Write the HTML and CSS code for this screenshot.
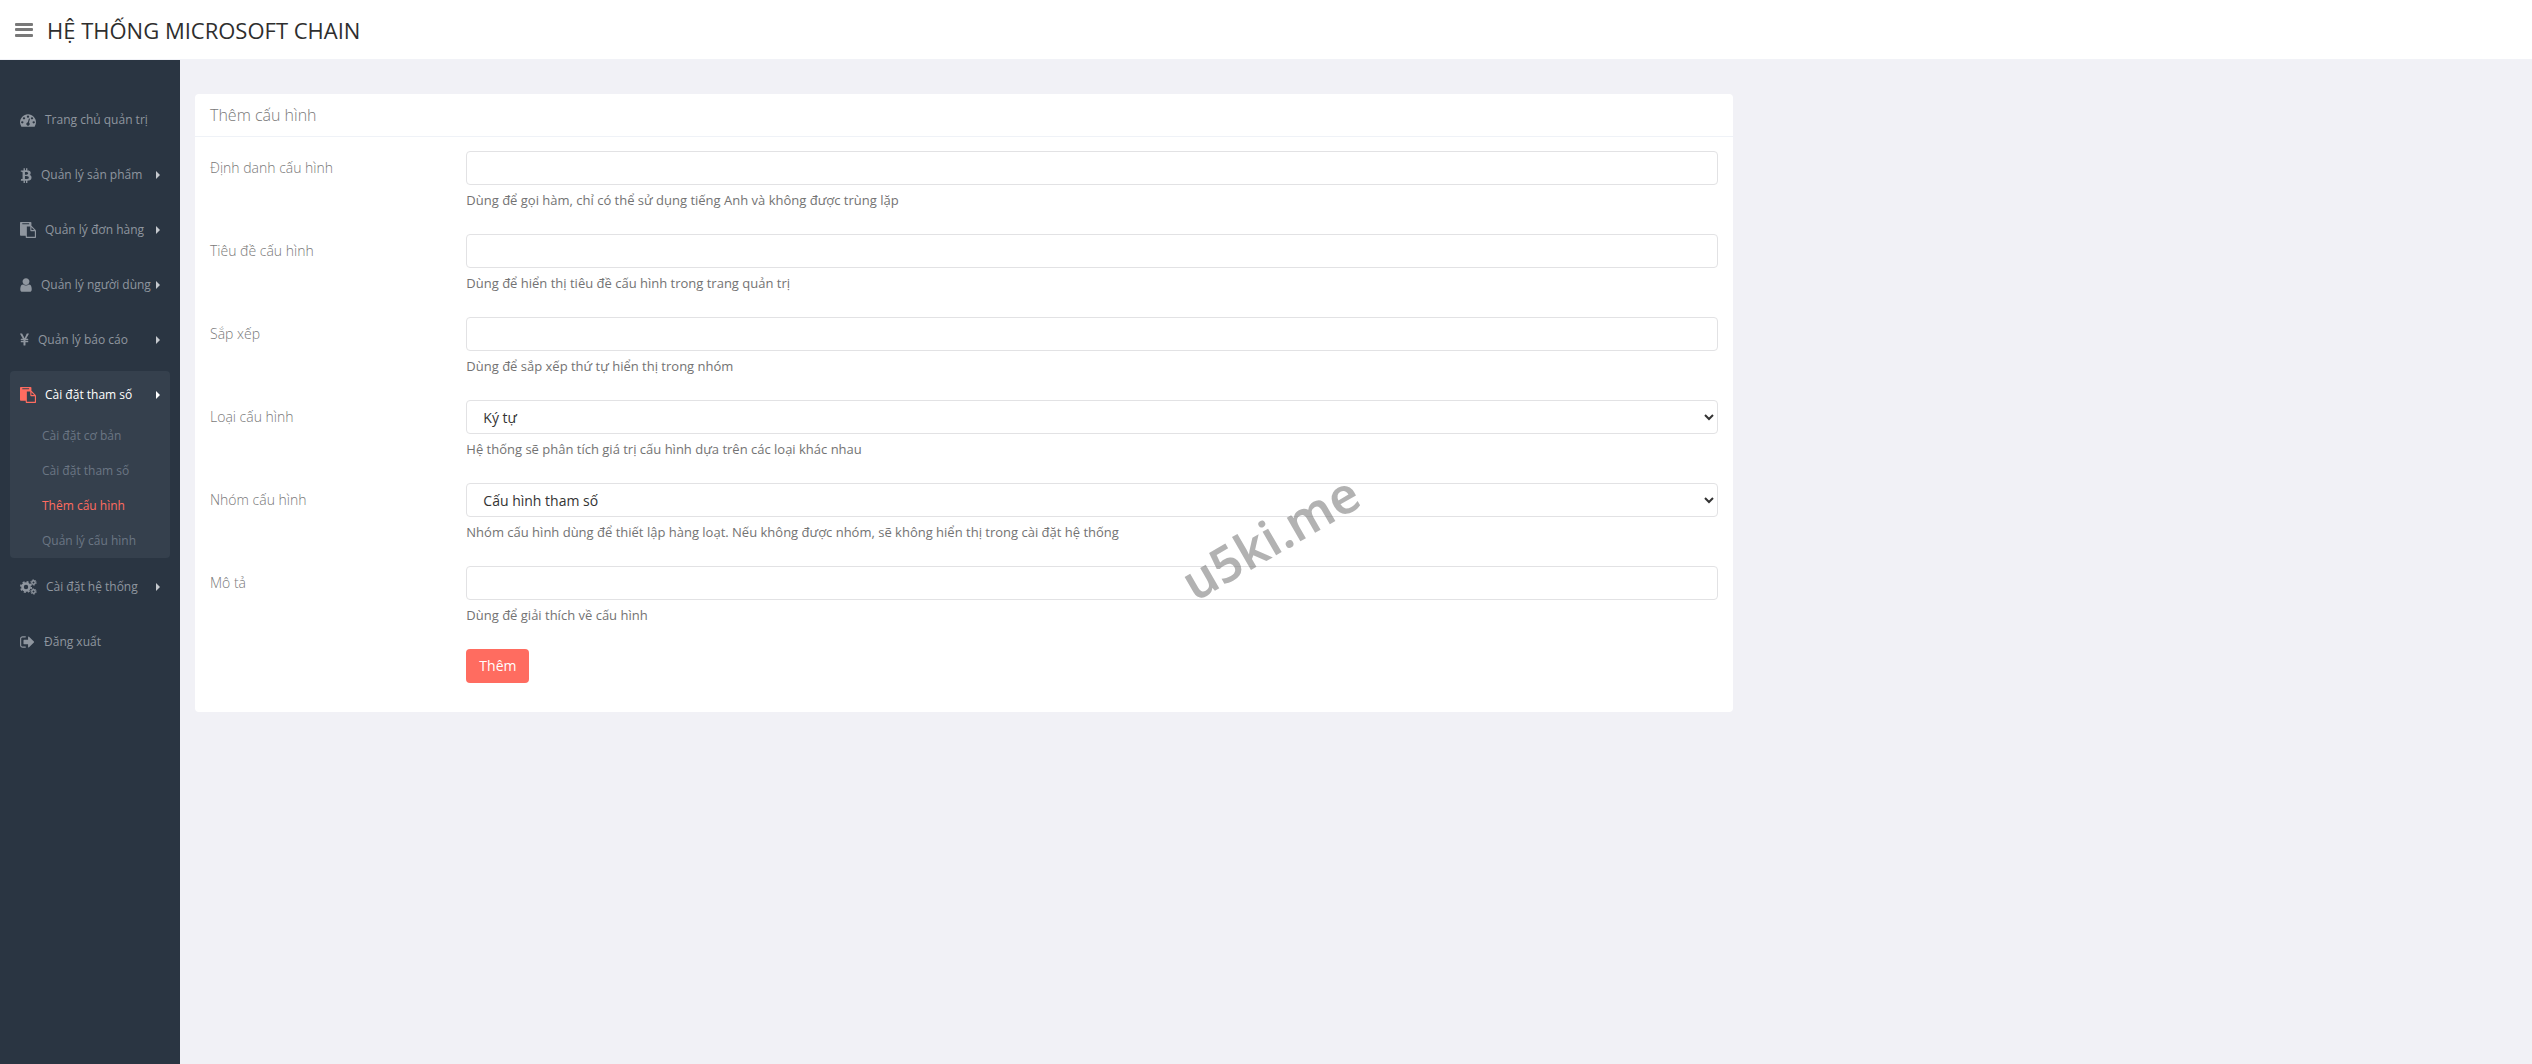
FILE: index.html
```html
<!DOCTYPE html>
<html lang="vi">
<head>
<meta charset="utf-8">
<meta name="viewport" content="width=device-width, initial-scale=1">
<title>Thêm cấu hình</title>
<link rel="stylesheet" href="styles.css">
</head>
<body>
<header class="topbar">
  <button class="toggle" type="button" aria-label="Menu">
    <svg width="18" height="14" viewBox="0 0 18 14" fill="currentColor"><rect width="18" height="3" rx="1"/><rect y="5" width="18" height="3" rx="1"/><rect y="11" width="18" height="3" rx="1"/></svg>
  </button>
  <a class="brand" href="#">HỆ THỐNG MICROSOFT CHAIN</a>
</header>
<div class="layout">
  <nav class="sidebar">
    <ul class="menu">
      <li class="menu-item"><a class="menu-link" href="#">
        <svg width="16" height="16" viewBox="0 0 1792 1792"><path d="M384 1152q0-53-37.5-90.5T256 1024t-90.5 37.5T128 1152t37.5 90.5T256 1280t90.5-37.5T384 1152zm192-448q0-53-37.5-90.5T448 576t-90.5 37.5T320 704t37.5 90.5T448 832t90.5-37.5T576 704zm428 481l101-382q6-26-7.5-48.5T1059 725t-48 6.5-30 39.5l-101 382q-60 5-107 43.5t-63 98.5q-20 77 20 146t117 89 146-20 89-117q16-60-6-117t-72-91zm660-33q0-53-37.5-90.5T1536 1024t-90.5 37.5T1408 1152t37.5 90.5T1536 1280t90.5-37.5T1664 1152zm-640-640q0-53-37.5-90.5T896 384t-90.5 37.5T768 512t37.5 90.5T896 640t90.5-37.5T1024 512zm448 192q0-53-37.5-90.5T1344 576t-90.5 37.5T1216 704t37.5 90.5T1344 832t90.5-37.5T1472 704zm320 448q0 261-141 483-19 29-54 29H195q-35 0-54-29Q0 1414 0 1152q0-182 71-348t191-286 286-191 348-71 348 71 286 191 191 286 71 348z"/></svg>
        <span>Trang chủ quản trị</span></a></li>
      <li class="menu-item"><a class="menu-link" href="#">
        <svg width="12" height="16" viewBox="0 0 1280 1792"><path d="M1167 640q18 182-131 258 117 28 175 103t45 214q-7 71-32.5 125t-64.5 89-97 58.5-121.5 34.5-145.5 15v255H641v-251q-80 0-122-1v252H365v-255q-18 0-54-.5t-55-.5H56l31-183h111q50 0 58-51V900h16q-6-1-16-1V612q-13-68-89-68H56V380l212 1q64 0 97-1V128h154v247q82-2 122-2V128h154v252q79 7 140 22.5t113 45 82.5 78 36.5 114.5zm-215 545q0-36-15-64t-37-46-57.5-30.5T777 1026t-74-9-69-3-64.5 1-47.5 1v338q8 0 37 .5t48 .5 53-1.5 58.5-4 57-8.5 55.5-14 47.5-21 39.5-30 24.5-40 9.5-51zm-71-476q0-33-12.5-58.5t-30.5-42-48-28-55-16.5-61.5-8-58-2.5-54 1-39.5.5v307q5 0 34.5.5t46.5 0 50-2 55-5.5 51.5-11 48.5-18.5 37-27 27-38.5 9-51z"/></svg>
        <span>Quản lý sản phẩm</span><i class="caret"></i></a></li>
      <li class="menu-item"><a class="menu-link" href="#">
        <svg width="16" height="16" viewBox="0 0 1792 1792"><path d="M768 1664h896v-640h-416q-40 0-68-28t-28-68V512H768v1152zm256-1440v-64q0-13-9.500-22.500T992 128H288q-13 0-22.500 9.500T256 160v64q0 13 9.500 22.500T288 256h704q13 0 22.500-9.500T1024 224zm256 672h299l-299-299v299zm512 128v672q0 40-28 68t-68 28H736q-40 0-68-28t-28-68v-160H96q-40 0-68-28t-28-68V96q0-40 28-68T96 0h1088q40 0 68 28t28 68v328q21 13 36 28l408 408q28 28 48 76t20 88z"/></svg>
        <span>Quản lý đơn hàng</span><i class="caret"></i></a></li>
      <li class="menu-item"><a class="menu-link" href="#">
        <svg width="12" height="16" viewBox="256 0 1280 1792"><path d="M1536 1399q0 109-62.500 187t-150.500 78H469q-88 0-150.500-78T256 1399q0-85 8.500-160.500t31.500-152 58.500-131 94-89T583 832q131 128 313 128t313-128q76 0 134.500 34.500t94 89 58.500 131 31.500 152 8.500 160.500zm-256-887q0 159-112.500 271.500T896 896 624.500 783.500 512 512t112.500-271.500T896 128t271.500 112.500T1280 512z"/></svg>
        <span>Quản lý người dùng</span><i class="caret"></i></a></li>
      <li class="menu-item"><a class="menu-link" href="#">
        <svg width="9" height="16" viewBox="130 0 1060 1792"><path d="M745 1536H573q-13 0-22.500-9t-9.500-23v-330H253q-13 0-22.500-9t-9.500-23v-103q0-13 9.500-22.500t22.500-9.500h288v-85H253q-13 0-22.500-9t-9.500-23V787q0-13 9.500-22.500T253 755h214L146 177q-8-16 0-32 10-17 28-17h194q20 0 29 18l215 425q19 38 56 125 10-24 30.500-68t27.500-61l191-420q8-19 29-19h191q17 0 27 16 9 14 1 31L851 755h215q13 0 22.500 9.500t9.500 22.500v104q0 14-9.500 23t-22.500 9H774v85h292q13 0 22.500 9.500t9.500 22.500v103q0 14-9.500 23t-22.500 9H774v330q0 13-9 22.500t-20 9.500z"/></svg>
        <span>Quản lý báo cáo</span><i class="caret"></i></a></li>
      <li class="menu-item open"><a class="menu-link" href="#">
        <svg width="16" height="16" viewBox="0 0 1792 1792"><path d="M768 1664h896v-640h-416q-40 0-68-28t-28-68V512H768v1152zm256-1440v-64q0-13-9.500-22.500T992 128H288q-13 0-22.500 9.500T256 160v64q0 13 9.500 22.500T288 256h704q13 0 22.500-9.500T1024 224zm256 672h299l-299-299v299zm512 128v672q0 40-28 68t-68 28H736q-40 0-68-28t-28-68v-160H96q-40 0-68-28t-28-68V96q0-40 28-68T96 0h1088q40 0 68 28t28 68v328q21 13 36 28l408 408q28 28 48 76t20 88z"/></svg>
        <span>Cài đặt tham số</span><i class="caret"></i></a>
        <ul class="submenu">
          <li><a class="sub-link" href="#">Cài đặt cơ bản</a></li>
          <li><a class="sub-link" href="#">Cài đặt tham số</a></li>
          <li><a class="sub-link current" href="#">Thêm cấu hình</a></li>
          <li><a class="sub-link" href="#">Quản lý cấu hình</a></li>
        </ul></li>
      <li class="menu-item"><a class="menu-link" href="#">
        <svg width="17" height="16" viewBox="0 0 17 16"><g fill="none" stroke="currentColor"><circle cx="6" cy="8" r="3.500" stroke-width="2.600"/><circle cx="6" cy="8" r="5.200" stroke-width="1.700" stroke-dasharray="2 2.084"/><circle cx="13.500" cy="3.500" r="1.700" stroke-width="1.400"/><circle cx="13.500" cy="3.500" r="2.700" stroke-width="1" stroke-dasharray="1.400 1.427"/><circle cx="13.500" cy="12.500" r="1.700" stroke-width="1.400"/><circle cx="13.500" cy="12.500" r="2.700" stroke-width="1" stroke-dasharray="1.400 1.427"/></g></svg>
        <span>Cài đặt hệ thống</span><i class="caret"></i></a></li>
      <li class="menu-item"><a class="menu-link" href="#">
        <svg width="15" height="16" viewBox="0 0 1664 1792"><path d="M640 1440q0 4 1 20t.5 26.500-3 23.500-10 19.500-20.500 6.500H288q-119 0-203.500-84.500T0 1248V544q0-119 84.500-203.500T288 256h320q13 0 22.500 9.500T640 288q0 4 1 20t.5 26.500-3 23.500-10 19.500T608 384H288q-66 0-113 47t-47 113v704q0 66 47 113t113 47h312l11.500 1 11.500 3 8 5.500 7 9 2 13.500zm928-544q0 26-19 45l-544 544q-19 19-45 19t-45-19-19-45v-288H448q-26 0-45-19t-19-45V704q0-26 19-45t45-19h448V352q0-26 19-45t45-19 45 19l544 544q19 19 19 45z"/></svg>
        <span>Đăng xuất</span></a></li>
    </ul>
  </nav>
  <main class="content">
    <section class="panel">
      <h1 class="panel-title">Thêm cấu hình</h1>
      <form class="panel-body">
        <div class="field">
          <label class="label" for="name">Định danh cấu hình</label>
          <div class="entry"><input class="control" id="name" type="text">
            <p class="help">Dùng để gọi hàm, chỉ có thể sử dụng tiếng Anh và không được trùng lặp</p></div>
        </div>
        <div class="field">
          <label class="label" for="title">Tiêu đề cấu hình</label>
          <div class="entry"><input class="control" id="title" type="text">
            <p class="help">Dùng để hiển thị tiêu đề cấu hình trong trang quản trị</p></div>
        </div>
        <div class="field">
          <label class="label" for="sort">Sắp xếp</label>
          <div class="entry"><input class="control" id="sort" type="text">
            <p class="help">Dùng để sắp xếp thứ tự hiển thị trong nhóm</p></div>
        </div>
        <div class="field">
          <label class="label" for="type">Loại cấu hình</label>
          <div class="entry"><select class="control" id="type"><option>Ký tự</option></select>
            <p class="help">Hệ thống sẽ phân tích giá trị cấu hình dựa trên các loại khác nhau</p></div>
        </div>
        <div class="field">
          <label class="label" for="group">Nhóm cấu hình</label>
          <div class="entry"><select class="control" id="group"><option>Cấu hình tham số</option></select>
            <p class="help">Nhóm cấu hình dùng để thiết lập hàng loạt. Nếu không được nhóm, sẽ không hiển thị trong cài đặt hệ thống</p></div>
        </div>
        <div class="field">
          <label class="label" for="remark">Mô tả</label>
          <div class="entry"><input class="control" id="remark" type="text">
            <p class="help">Dùng để giải thích về cấu hình</p></div>
        </div>
        <div class="field">
          <div class="entry actions"><button class="submit" type="submit">Thêm</button></div>
        </div>
      </form>
    </section>
  </main>
</div>
<div class="watermark">u5ki.me</div>
</body>
</html>
```
FILE: styles.css
```css
* { box-sizing: border-box; }
body {
  margin: 0;
  min-height: 100vh;
  display: flex;
  flex-direction: column;
  position: relative;
  background: #f1f1f6;
  color: #797979;
  font: 13px/20px "Open Sans", "Noto Sans", sans-serif;
}
ul { list-style: none; margin: 0; padding: 0; }
a { color: inherit; text-decoration: none; }
button, input, select { font: inherit; }

.topbar {
  display: flex;
  align-items: center;
  gap: 14px;
  height: 60px;
  padding: 0 15px;
  background: #fff;
  border-bottom: 1px solid #f1f2f7;
}
.toggle { display: flex; padding: 0; border: 0; background: none; color: #797979; }
.brand { font-size: 22px; line-height: 30px; color: #2e2e2e; }

.layout { flex: 1; display: flex; }
.sidebar { flex: 0 0 180px; min-width: 0; padding: 36px 10px 0; background: #2a3542; color: #aeb2b7; }
.menu-item { margin-bottom: 7px; }
.menu-link { display: flex; align-items: center; height: 48px; padding: 0 10px; font-size: 12px; white-space: nowrap; color: #8f969f; }
.menu-link svg { flex: none; margin-right: 9px; fill: currentColor; }
.caret { flex: none; margin-left: auto; border: solid transparent; border-width: 4px 0 4px 4px; border-left-color: #c5c9ce; }
.open { margin-bottom: 5px; background: #35404d; border-radius: 4px; }
.open > .menu-link { color: #fff; }
.open > .menu-link svg { color: #ff6c60; }
.open .caret { border-left-color: #fff; }
.submenu { margin-top: -1px; }
.sub-link { display: block; padding-left: 32px; font-size: 12px; line-height: 35px; color: #6b7684; }
.sub-link.current { color: #ff6c60; }

.content { flex: 1; min-width: 0; padding-top: 34px; }
.panel { width: calc(66.6667% - 30px); margin-left: 15px; background: #fff; border-radius: 4px; }
.panel-title { margin: 0; padding: 10px 15px; border-bottom: 1px solid #eff2f7; font-size: 16px; line-height: 22px; font-weight: 300; }
.panel-body { padding: 14px 0 29px; }
.field { display: grid; grid-template-columns: 1fr 5fr; margin-bottom: 15px; }
.field:last-child { margin-bottom: 0; }
.label { padding: 7px 15px 0; font-size: 14px; font-weight: 300; }
.entry { padding: 0 15px; }
.actions { grid-column: 2; }
.control { display: block; width: 100%; height: 34px; padding: 6px 12px; border: 1px solid #e2e2e4; border-radius: 4px; background: #fff; color: #333; font-size: 14px; }
.help { margin: 5px 0 9px; color: #737373; }
.submit { display: block; height: 34px; padding: 0 13px; border: 0; border-radius: 4px; background: #ff6c60; color: #fff; font-size: 14px; }

.watermark {
  position: absolute;
  left: 1270px;
  top: 537px;
  transform: translate(-50%, -50%) rotate(-30deg);
  color: rgba(120, 120, 120, .57);
  font: 600 50px/60px "Noto Sans", sans-serif;
  pointer-events: none;
}
```
